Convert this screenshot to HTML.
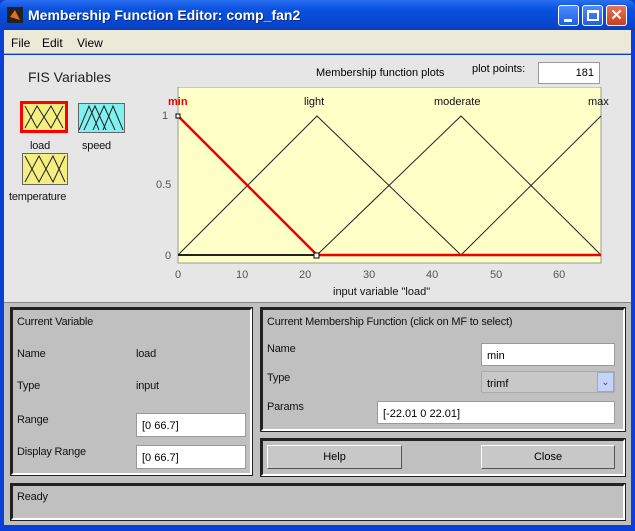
<!DOCTYPE html>
<html><head><style>
*{margin:0;padding:0;box-sizing:border-box}
body{width:635px;height:531px;overflow:hidden;font-family:"Liberation Sans",sans-serif;font-size:11px;background:#0a3fd8;position:relative}
.a{position:absolute}
.title{left:0;top:0;width:635px;height:30px;background:linear-gradient(#2a6ff0,#0a52e0 30%,#0846d0 80%,#0a3fb8);border-radius:7px 7px 0 0}
.title span{position:absolute;left:28px;top:7px;color:#fff;font-weight:bold;font-size:14px;text-shadow:1px 1px #0a2a80}
.btn{top:5px;width:21px;height:21px;border:1px solid #fff;border-radius:3px;background:linear-gradient(#4d8cf8,#1f5ee8)}
.menu{left:4px;top:30px;width:627px;height:24px;background:#ece9d8;border-bottom:1px solid #aca899}
.menu span{position:absolute;top:6px;font-size:12px}
.upper{left:4px;top:55px;width:627px;height:247px;background:#e6e6e6}
.lower{left:4px;top:302px;width:627px;height:223px;background:#c0c0c0;border-top:1px solid #888}
.box{border:2px solid #222;border-right-color:#fff;border-bottom-color:#fff;outline:1px solid #222}
.fld{background:#fff;border:1px solid #999;font-size:11px;padding:6px 0 0 5px}
.lb{font-size:11px;color:#111;letter-spacing:-0.2px}
.pb{background:#c8c8c8;border:1px solid #fff;border-right-color:#555;border-bottom-color:#555;text-align:center;padding-top:5px}
</style></head><body>
<div class="a title"><div class="a" style="left:7px;top:7px;width:16px;height:16px;background:#222"><div style="margin:3px;width:10px;height:10px;background:#e07020;clip-path:polygon(50% 0,100% 100%,0 70%)"></div></div><span>Membership Function Editor: comp_fan2</span></div>
<div class="a btn" style="left:558px"><div style="position:absolute;left:5px;top:13px;width:8px;height:3px;background:#fff"></div></div>
<div class="a btn" style="left:582px"><div style="position:absolute;left:4px;top:4px;width:12px;height:11px;border:2px solid #fff;border-top-width:3px"></div></div>
<div class="a btn" style="left:606px;background:linear-gradient(#e8735a,#c8401e);color:#fff;font-weight:bold;font-size:15px;text-align:center;line-height:19px">✕</div>
<div class="a menu"><span style="left:7px">File</span><span style="left:38px">Edit</span><span style="left:73px">View</span></div>
<div class="a upper"></div>
<div class="a" style="left:28px;top:69px;font-size:14px;color:#222">FIS Variables</div>
<div class="a" style="left:20px;top:101px;width:48px;height:32px;background:#f5ee80;border:3px solid #f00"><svg width="42" height="26"><polyline points="2,2 14,24 28,2 40,24" fill="none" stroke="#222"/><polyline points="2,24 14,2 28,24 40,2" fill="none" stroke="#222"/></svg></div>
<div class="a" style="left:78px;top:103px;width:47px;height:30px;background:#80f0f0;border:1px solid #666"><svg width="45" height="28"><polyline points="0,26 10,2 20,26" fill="none" stroke="#222"/><polyline points="5,26 16,2 27,26" fill="none" stroke="#222"/><polyline points="14,26 25,2 36,26" fill="none" stroke="#222"/><polyline points="24,26 34,2 44,26" fill="none" stroke="#222"/></svg></div>
<div class="a lb" style="left:30px;top:140px">load</div>
<div class="a lb" style="left:82px;top:140px">speed</div>
<div class="a" style="left:22px;top:153px;width:46px;height:32px;background:#f5ee80;border:1px solid #666"><svg width="44" height="30"><polyline points="2,2 16,28 30,2 42,28" fill="none" stroke="#222"/><polyline points="2,28 16,2 30,28 42,2" fill="none" stroke="#222"/></svg></div>
<div class="a lb" style="left:9px;top:191px">temperature</div>
<div class="a" style="left:316px;top:67px;font-size:11px">Membership function plots</div>
<div class="a" style="left:472px;top:63px;font-size:11px">plot points:</div>
<div class="a fld" style="left:538px;top:62px;width:62px;height:22px;text-align:right;padding-right:5px;padding-top:4px">181</div>
<svg class="a" style="left:150px;top:87px" width="470" height="215">
<rect x="28" y="0" width="423" height="176" fill="#ffffc8" stroke="#999"/>
<g stroke="#222" fill="none" stroke-width="1">
<polyline points="28,168 167,29 311,168"/>
<polyline points="167,168 311,29 451,168"/>
<polyline points="311,168 451,29"/>
</g>
<line x1="28" y1="168" x2="451" y2="168" stroke="#222" stroke-width="2"/>
<polyline points="28,29 167,168 451,168" fill="none" stroke="#e00" stroke-width="2.5"/>
<rect x="164" y="166" width="5" height="5" fill="#fff" stroke="#000"/>
<rect x="26" y="27" width="4" height="4" fill="#fff" stroke="#000"/>
<g font-size="11" fill="#555" font-family="Liberation Sans">
<text x="12" y="32">1</text><text x="6" y="101">0.5</text><text x="15" y="172">0</text>
<text x="25" y="191">0</text><text x="86" y="191">10</text><text x="149" y="191">20</text><text x="213" y="191">30</text><text x="276" y="191">40</text><text x="340" y="191">50</text><text x="403" y="191">60</text>
</g>
<g font-size="11" fill="#111" font-family="Liberation Sans">
<text x="18" y="18" fill="#e00" font-weight="bold">min</text><text x="154" y="18">light</text><text x="284" y="18">moderate</text><text x="438" y="18">max</text>
<text x="183" y="208">input variable "load"</text>
</g>
</svg>
<div class="a lower"></div>
<div class="a box" style="left:11px;top:308px;width:241px;height:167px"></div>
<div class="a lb" style="left:17px;top:316px">Current Variable</div>
<div class="a lb" style="left:17px;top:348px">Name</div><div class="a lb" style="left:136px;top:348px">load</div>
<div class="a lb" style="left:17px;top:380px">Type</div><div class="a lb" style="left:136px;top:380px">input</div>
<div class="a lb" style="left:17px;top:414px">Range</div>
<div class="a lb" style="left:17px;top:446px">Display Range</div>
<div class="a fld" style="left:136px;top:413px;width:110px;height:24px">[0 66.7]</div>
<div class="a fld" style="left:136px;top:445px;width:110px;height:24px">[0 66.7]</div>
<div class="a box" style="left:261px;top:308px;width:364px;height:123px"></div>
<div class="a lb" style="left:267px;top:316px">Current Membership Function (click on MF to select)</div>
<div class="a lb" style="left:267px;top:343px">Name</div>
<div class="a lb" style="left:267px;top:372px">Type</div>
<div class="a lb" style="left:267px;top:401px">Params</div>
<div class="a fld" style="left:481px;top:343px;width:134px;height:23px">min</div>
<div class="a fld" style="left:481px;top:371px;width:134px;height:22px;background:#c8c8c8;border-color:#aaa">trimf</div>
<div class="a" style="left:597px;top:372px;width:17px;height:20px;background:#c4d4f8;border:1px solid #9ab;color:#2a4ab0;font-size:10px;text-align:center;line-height:20px">&#8964;</div>
<div class="a fld" style="left:377px;top:401px;width:238px;height:23px">[-22.01 0 22.01]</div>
<div class="a box" style="left:261px;top:439px;width:364px;height:37px"></div>
<div class="a pb" style="left:267px;top:445px;width:135px;height:24px">Help</div>
<div class="a pb" style="left:481px;top:445px;width:134px;height:24px">Close</div>
<div class="a box" style="left:11px;top:484px;width:614px;height:36px"></div>
<div class="a lb" style="left:17px;top:491px">Ready</div>
</body></html>
